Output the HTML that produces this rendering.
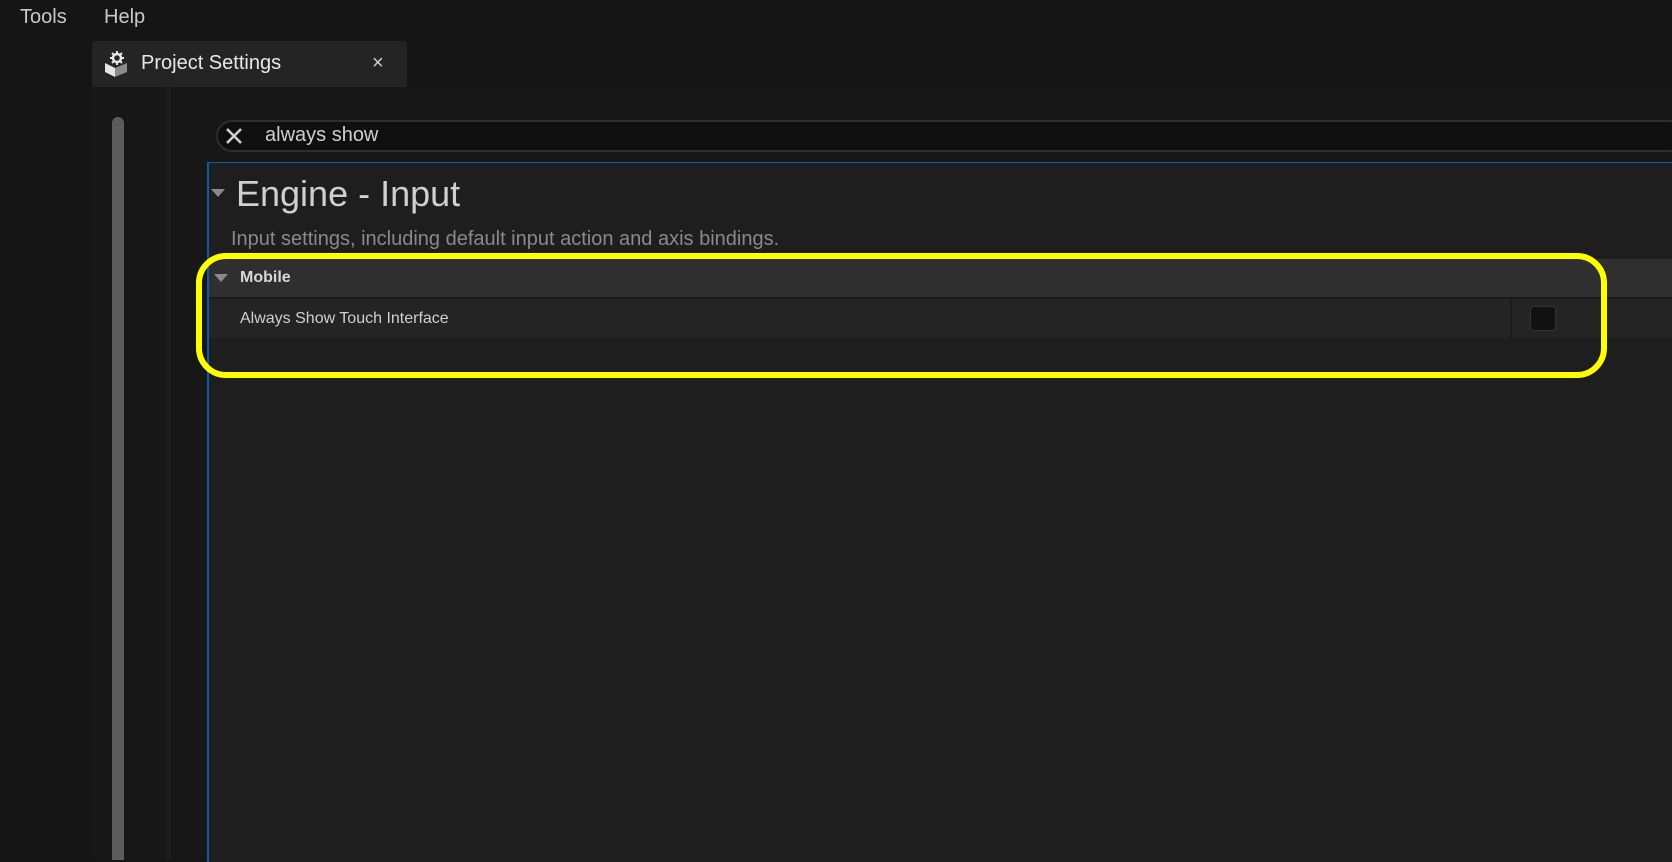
<!DOCTYPE html>
<html><head><style>
*{margin:0;padding:0;box-sizing:border-box}
body{width:1672px;height:860px;background:#151515;position:relative;overflow:hidden;font-family:"Liberation Sans",sans-serif}
.a{position:absolute}
</style></head><body>
<div class="a" style="left:20px;top:6px;font-size:20px;color:#c8c8c8">Tools</div>
<div class="a" style="left:104px;top:6px;font-size:20px;color:#c8c8c8">Help</div>
<div class="a" style="left:92px;top:41px;width:315px;height:46px;background:#242424;border-radius:4px 4px 0 0"></div>
<svg class="a" style="left:102px;top:50px" width="30" height="28" viewBox="0 0 30 28">
<path d="M3 13 L13 18 L13 27 L3 22Z" fill="#e6e6e6"/><path d="M13 18 L25 13 L25 22 L13 27Z" fill="#8a8a8a"/>
<circle cx="15" cy="8" r="4" fill="none" stroke="#e6e6e6" stroke-width="2.5"/>
<path d="M15 1v3M15 12v3M8 8h3M19 8h3M10 3l2 2M18 11l2 2M20 3l-2 2M10 13l2-2" stroke="#e6e6e6" stroke-width="2"/>
</svg>
<div class="a" style="left:141px;top:52px;font-size:20px;color:#e8e8e8">Project Settings</div>
<div class="a" style="left:372px;top:52px;font-size:20px;color:#cfcfcf">×</div>
<div class="a" style="left:92px;top:87px;width:1580px;height:773px;background:#171717"></div>
<div class="a" style="left:112px;top:117px;width:12px;height:743px;background:#5c5c5c;border-radius:6px 6px 0 0"></div>
<div class="a" style="left:166px;top:87px;width:5px;height:773px;background:#1c1c1c"></div>
<div class="a" style="left:216px;top:120px;width:1470px;height:32px;background:#0f0f0f;border:2px solid #2e2e2e;border-radius:16px"></div>
<svg class="a" style="left:224px;top:126px" width="20" height="20"><path d="M3 3L17 17M17 3L3 17" stroke="#d0d0d0" stroke-width="2.6"/></svg>
<div class="a" style="left:265px;top:124px;font-size:20px;color:#cfcfcf">always show</div>
<div class="a" style="left:207px;top:162px;width:1470px;height:700px;background:#1e1e1e;border-left:2px solid #0d5aa8;border-top:1px solid #0d5aa8"></div>
<svg class="a" style="left:211px;top:189px" width="14" height="10"><path d="M0 0H14L7 8Z" fill="#8a8a8a"/></svg>
<div class="a" style="left:236px;top:173px;font-size:36px;color:#d0d0d0">Engine - Input</div>
<div class="a" style="left:231px;top:228px;font-size:20px;color:#8a8a8a">Input settings, including default input action and axis bindings.</div>
<div class="a" style="left:209px;top:259px;width:1463px;height:39px;background:#2f2f2f;border-bottom:1px solid #1a1a1a"></div>
<svg class="a" style="left:214px;top:274px" width="14" height="10"><path d="M0 0H14L7 8Z" fill="#8a8a8a"/></svg>
<div class="a" style="left:240px;top:269px;font-size:16px;font-weight:bold;color:#d8d8d8">Mobile</div>
<div class="a" style="left:209px;top:299px;width:1463px;height:39px;background:#242424"></div>
<div class="a" style="left:1510px;top:299px;width:2px;height:39px;background:#1a1a1a"></div>
<div class="a" style="left:240px;top:310px;font-size:16px;color:#cfcfcf">Always Show Touch Interface</div>
<div class="a" style="left:1530px;top:306px;width:26px;height:25px;background:#111;border:1px solid #333;border-radius:4px"></div>
<div class="a" style="left:196px;top:253px;width:1411px;height:125px;border:6px solid #ffff00;border-radius:30px"></div>
</body></html>
